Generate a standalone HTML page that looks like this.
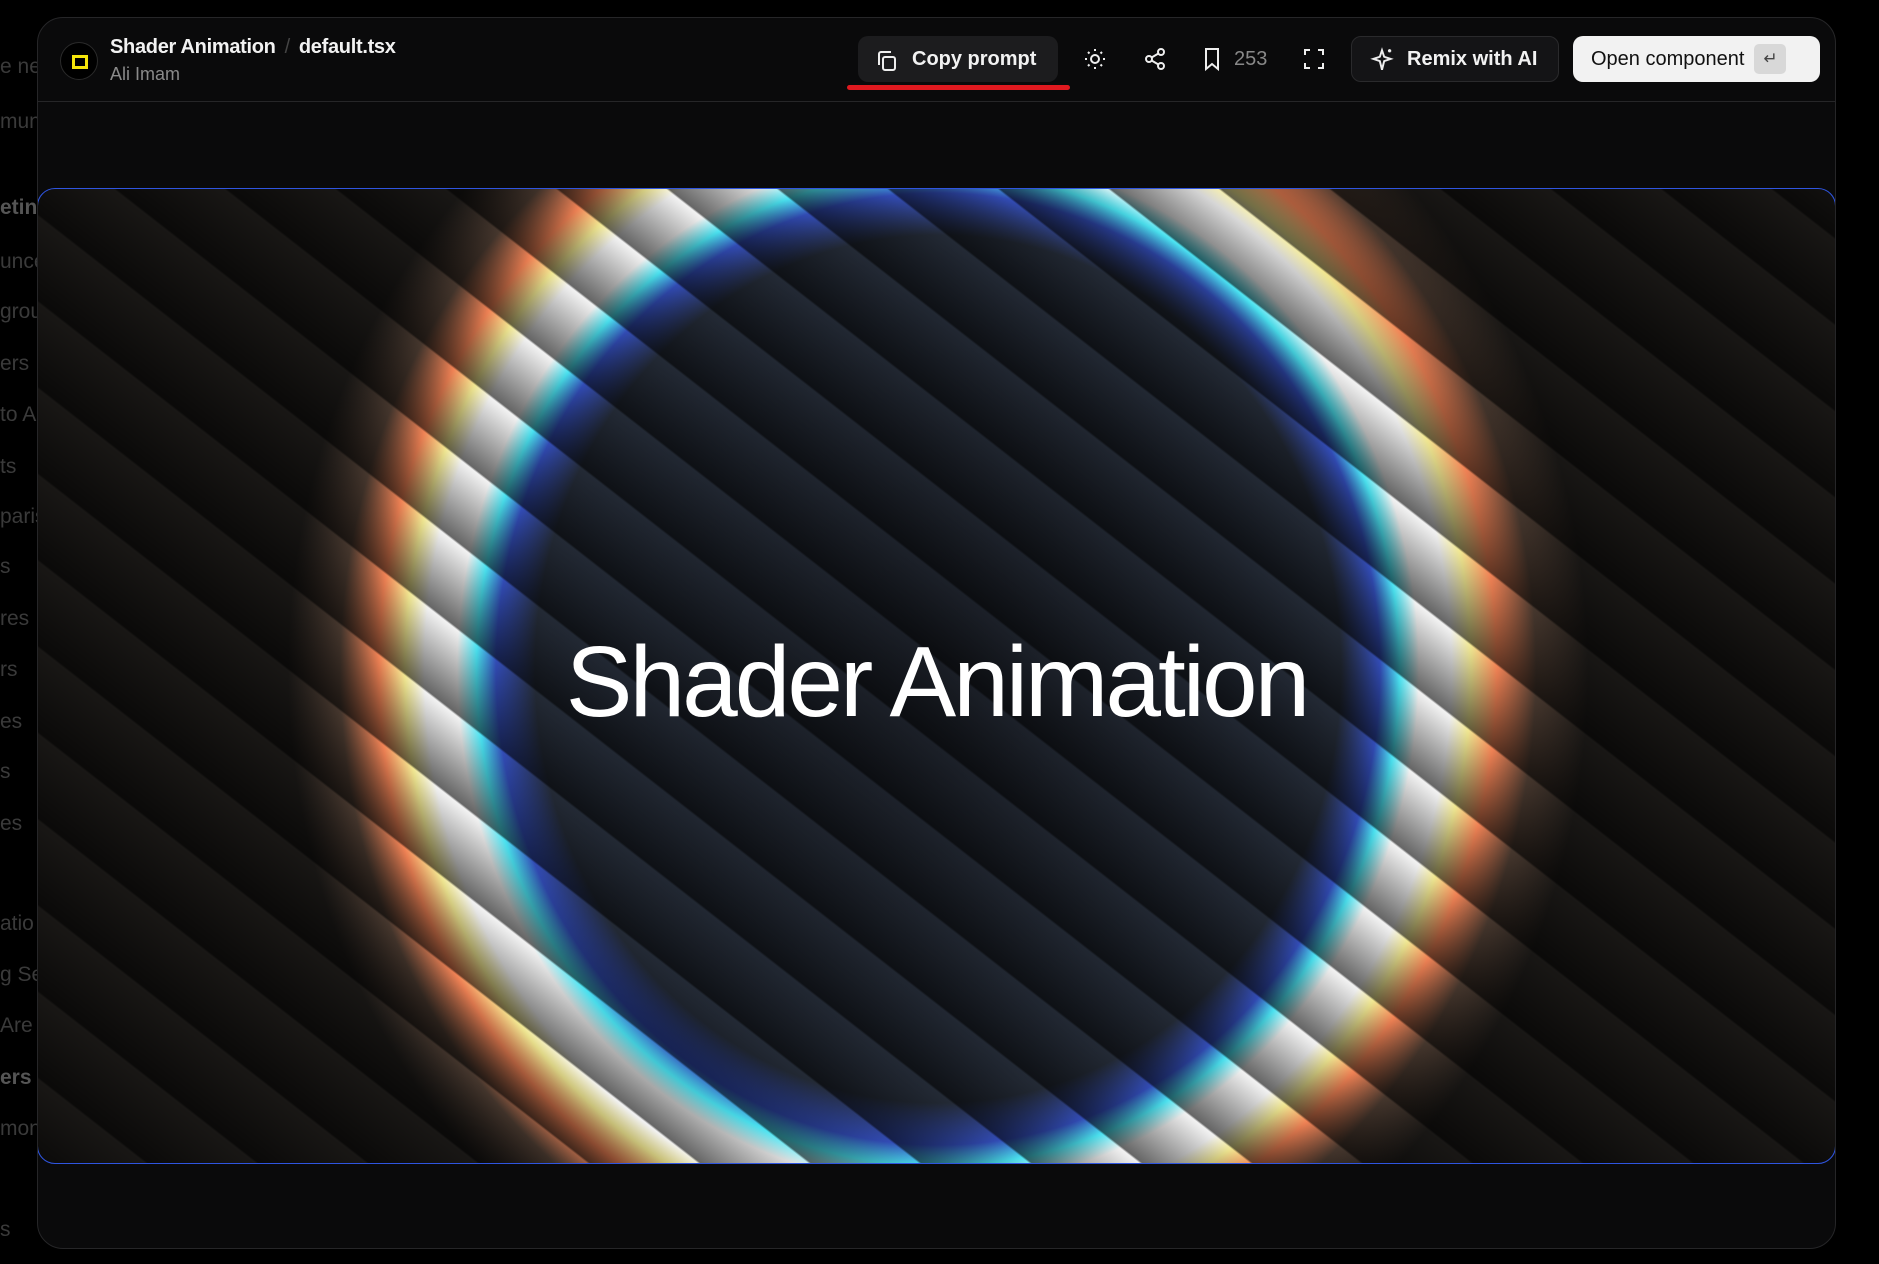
<!DOCTYPE html>
<html><head><meta charset="utf-8">
<style>
html,body{margin:0;padding:0;width:1879px;height:1264px;background:#000;overflow:hidden;font-family:"Liberation Sans",sans-serif}
.side{position:absolute;left:0;color:#3a3a3a;font-size:21px;white-space:nowrap}
.modal{position:absolute;left:37px;top:17px;width:1797px;height:1230px;background:#0a0a0b;border:1px solid #262628;border-radius:26px;overflow:hidden}
.hdr{position:absolute;left:0;top:0;right:0;height:83px;border-bottom:1px solid #262628}
.logo{position:absolute;left:22px;top:24px;width:36px;height:36px;border-radius:50%;background:#000;border:1px solid #2a2a2a}
.logo i{position:absolute;left:11px;top:12px;width:10px;height:8px;border:3px solid #f5e50a}
.t1{position:absolute;left:72px;top:18px;color:#f2f2f2;font-size:20px;font-weight:bold;letter-spacing:-.3px}
.t1 span{color:#444;font-weight:normal;margin:0 9px}
.t2{position:absolute;left:72px;top:46px;color:#8a8a8a;font-size:18px}
.btn{position:absolute;top:18px;height:46px;border-radius:10px;color:#f2f2f2;font-size:20px;font-weight:bold;display:flex;align-items:center;box-sizing:border-box}
.ic{position:absolute;top:28px}
.canvas{position:absolute;left:-1px;top:170px;width:1797px;height:974px;border:1px solid #2f55e0;border-radius:18px;overflow:hidden;
background:
repeating-linear-gradient(38deg,rgba(0,0,0,.6) 0px,rgba(0,0,0,.05) 66px,rgba(0,0,0,.6) 68px),
radial-gradient(ellipse 650px 700px at 900px 480px,#1b1f27 0%,#252c38 62%,#3550c0 68%,#4ff0ff 71%,#ffffff 74%,#ffffff 79%,#fff59a 82%,#ff8a5a 86%,#4a3a30 92%,#1a1816 100%);
}
.title{position:absolute;left:0;right:0;top:436px;text-align:center;color:#fff;font-size:100px;letter-spacing:-3px;font-family:"Liberation Sans",sans-serif}
</style></head><body>
<div class="side" style="top:55px">e ne</div>
<div class="side" style="top:110px">muni</div>
<div class="side" style="top:196px;color:#555;font-weight:bold">eting</div>
<div class="side" style="top:250px">unce</div>
<div class="side" style="top:300px">grou</div>
<div class="side" style="top:352px">ers</div>
<div class="side" style="top:403px">to A</div>
<div class="side" style="top:455px">ts</div>
<div class="side" style="top:505px">paris</div>
<div class="side" style="top:555px">s</div>
<div class="side" style="top:607px">res</div>
<div class="side" style="top:658px">rs</div>
<div class="side" style="top:710px">es</div>
<div class="side" style="top:760px">s</div>
<div class="side" style="top:812px">es</div>
<div class="side" style="top:912px">atio</div>
<div class="side" style="top:963px">g Se</div>
<div class="side" style="top:1014px">Are</div>
<div class="side" style="top:1066px;color:#555;font-weight:bold">ers</div>
<div class="side" style="top:1117px">mon</div>
<div class="side" style="top:1218px">s</div>
<div class="modal">
 <div class="hdr">
  <div class="logo"><i></i></div>
  <div class="t1">Shader Animation<span>/</span>default.tsx</div>
  <div class="t2">Ali Imam</div>
  <div class="btn" style="left:820px;width:200px;background:#1c1c1e;padding-left:54px">Copy prompt</div>
  <svg class="ic" style="left:837px;top:31px" width="24" height="24" viewBox="0 0 24 24" fill="none" stroke="#eee" stroke-width="2"><rect x="8" y="8" width="12" height="13" rx="2"/><path d="M4 16V5a2 2 0 0 1 2-2h10"/></svg>
  <div style="position:absolute;left:809px;top:67px;width:223px;height:5px;border-radius:3px;background:#e0191f"></div>
  <svg class="ic" style="left:1045px;top:29px" width="24" height="24" viewBox="0 0 24 24" fill="none" stroke="#eee" stroke-width="2"><circle cx="12" cy="12" r="4"/><path d="M12 2v2M12 20v2M2 12h2M20 12h2M5 5l1.5 1.5M17.5 17.5L19 19M5 19l1.5-1.5M17.5 6.5L19 5"/></svg>
  <svg class="ic" style="left:1105px;top:29px" width="24" height="24" viewBox="0 0 24 24" fill="none" stroke="#eee" stroke-width="2"><circle cx="18" cy="5" r="3"/><circle cx="6" cy="12" r="3"/><circle cx="18" cy="19" r="3"/><path d="M8.6 13.5l6.8 4M15.4 6.5l-6.8 4"/></svg>
  <svg class="ic" style="left:1162px;top:28px" width="24" height="26" viewBox="0 0 24 26" fill="none" stroke="#eee" stroke-width="2"><path d="M6 3h12v20l-6-5-6 5z"/></svg>
  <div style="position:absolute;left:1196px;top:30px;color:#888;font-size:20px">253</div>
  <svg class="ic" style="left:1264px;top:29px" width="24" height="24" viewBox="0 0 24 24" fill="none" stroke="#eee" stroke-width="2"><path d="M3 8V3h5M16 3h5v5M21 16v5h-5M8 21H3v-5"/></svg>
  <div class="btn" style="left:1313px;width:208px;background:#141416;border:1px solid #2a2a2c;padding-left:55px">Remix with AI</div>
  <svg class="ic" style="left:1331px;top:29px" width="26" height="26" viewBox="0 0 24 24" fill="none" stroke="#eee" stroke-width="1.8"><path d="M12 3l2 6 6 2-6 2-2 8-2-8-6-2 6-2z"/><path d="M19 2v3M17.5 3.5h3"/></svg>
  <div class="btn" style="left:1535px;width:247px;background:#f2f2f2;color:#111;font-weight:normal;padding-left:18px">Open component<span style="margin-left:10px;width:32px;height:30px;background:#d8d8d8;border-radius:5px;display:inline-flex;align-items:center;justify-content:center;font-size:17px;color:#444">↵</span></div>
 </div>
 <div class="canvas"><div class="title">Shader Animation</div></div>
</div>
</body></html>
